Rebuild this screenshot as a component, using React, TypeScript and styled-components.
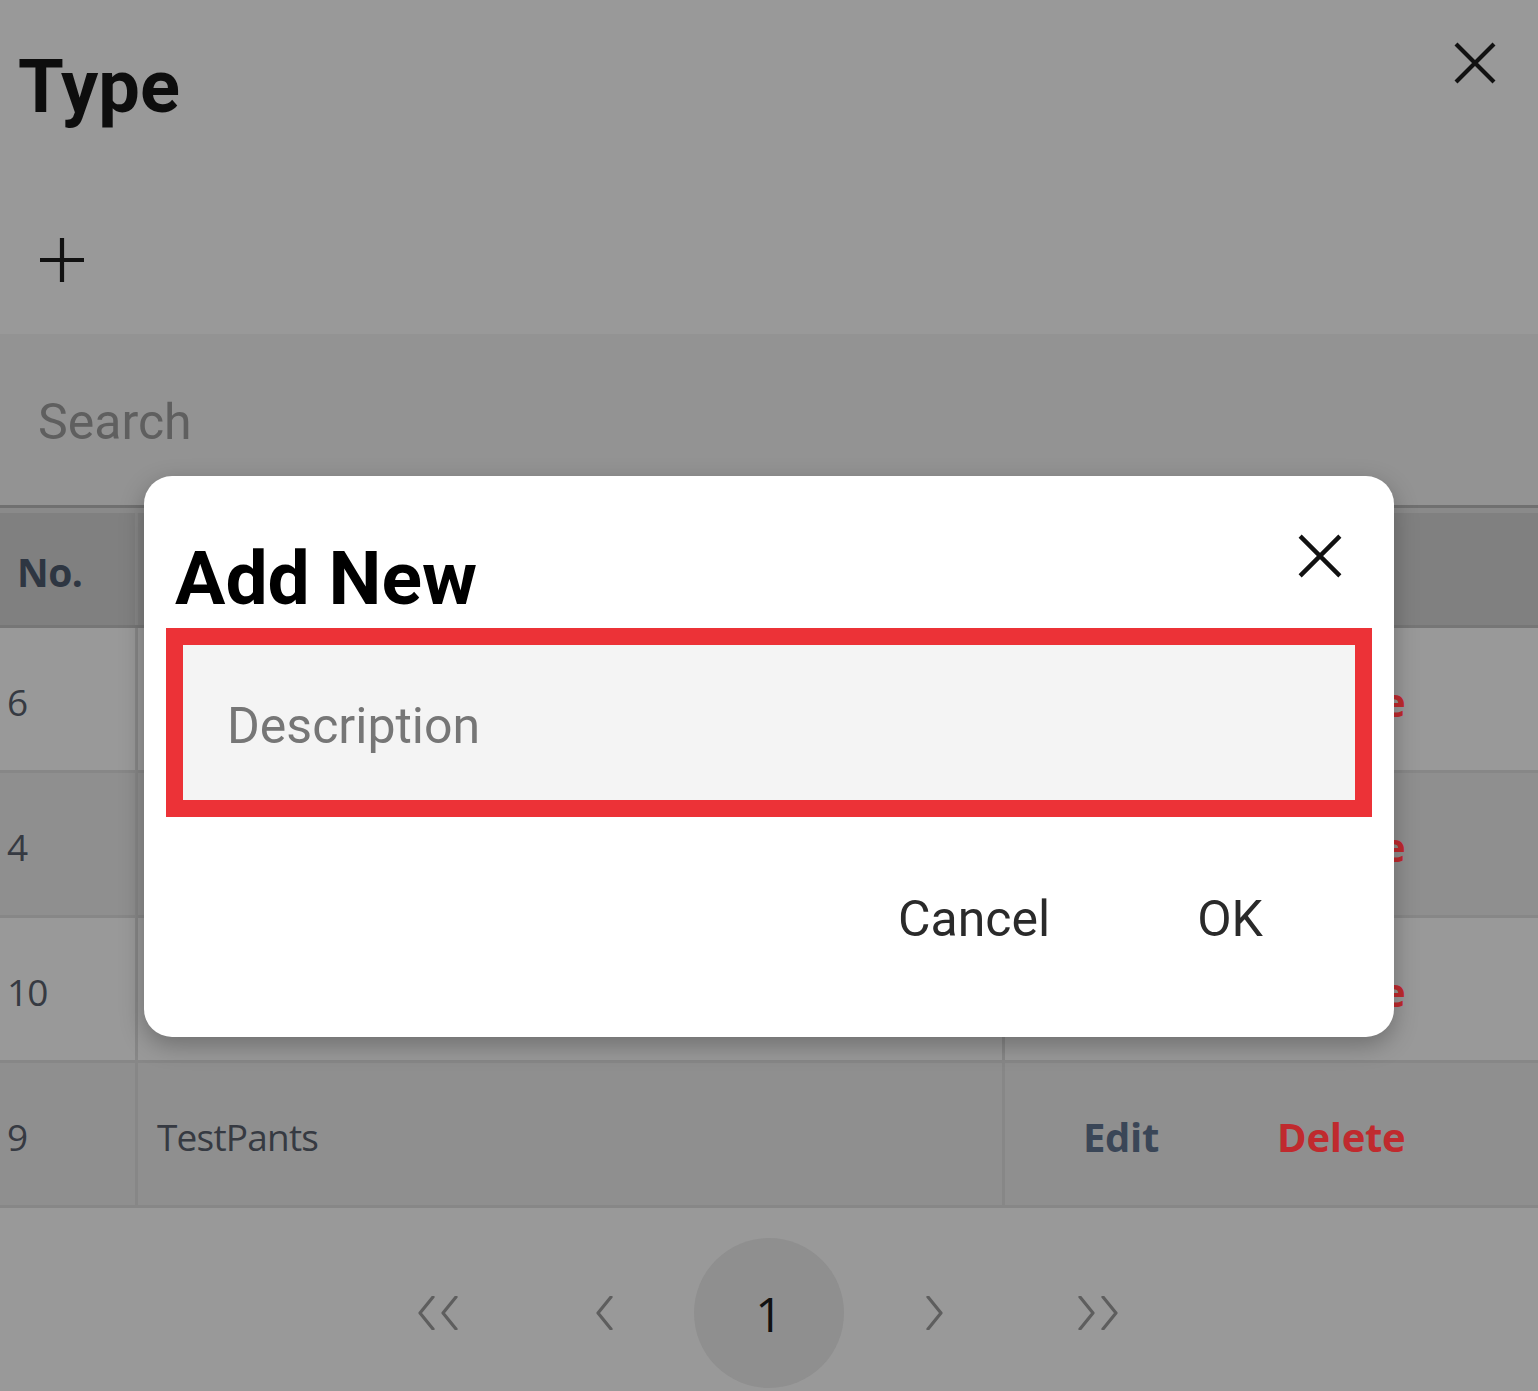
import React from "react";
import styled, { createGlobalStyle } from "styled-components";

const Global = createGlobalStyle`
  html, body { margin: 0; padding: 0; background: #999999; }
  * { box-sizing: border-box; }
`;

const Page = styled.div`
  position: relative;
  width: 1538px;
  height: 1391px;
  overflow: hidden;
  background: #999999;
  font-family: Roboto, "Liberation Sans", sans-serif;
`;

const TopSection = styled.div`
  height: 334px;
  display: flex;
  flex-direction: column;
`;

const TitleBar = styled.div`
  display: flex;
  justify-content: space-between;
  align-items: flex-start;
  padding: 41px 41px 0 18px;
`;

const Title = styled.h1`
  margin: 9px 0 0;
  font-size: 74px;
  line-height: 1;
  font-weight: 700;
  color: #0d0d0d;
`;

const IconButton = styled.button`
  border: 0;
  background: transparent;
  padding: 0;
  display: flex;
  color: #111;
`;

const AddButton = styled(IconButton)`
  margin: 113px 0 0 39px;
  align-self: flex-start;
`;

const SearchBar = styled.div`
  height: 171px;
  background: #939393;
  display: flex;
  align-items: center;
  padding: 5px 0 0 38px;
  font-size: 50px;
  color: #5f5f5f;
`;

const Table = styled.div`
  border-top: 3px solid #707070;
  padding-top: 5px;
  background: #8a8a8a;
  font-family: "Open Sans", "Liberation Sans", sans-serif;
`;

const Row = styled.div<{ $head?: boolean; $alt?: boolean }>`
  display: grid;
  grid-template-columns: 138px 867px 1fr;
  height: ${(p) => (p.$head ? "115px" : "145px")};
  background: ${(p) => (p.$head ? "#808080" : p.$alt ? "#8f8f8f" : "#999999")};
  border-bottom: 3px solid ${(p) => (p.$head ? "#767676" : "#878787")};
`;

const Cell = styled.div<{ $pad?: number; $last?: boolean }>`
  display: flex;
  align-items: center;
  padding-left: ${(p) => p.$pad ?? 18}px;
  padding-top: 4px;
  border-right: ${(p) => (p.$last ? "0" : "3px solid #878787")};
  font-size: 37px;
  color: #363a42;
  letter-spacing: -0.8px;
`;

const HeadLabel = styled.span`
  font-weight: 700;
  font-size: 39px;
  color: #2e3642;
  letter-spacing: -0.5px;
`;

const Actions = styled.div`
  display: flex;
  align-items: center;
  gap: 118px;
  padding-left: 78px;
`;

const ActionLink = styled.span<{ $danger?: boolean }>`
  font-weight: 700;
  font-size: 40px;
  letter-spacing: -0.3px;
  color: ${(p) => (p.$danger ? "#c02a2e" : "#3a4657")};
`;

const Pager = styled.div`
  display: flex;
  justify-content: center;
  align-items: center;
  gap: 15px;
  padding-top: 30px;
`;

const PageItem = styled.div<{ $active?: boolean }>`
  width: 150px;
  height: 150px;
  border-radius: 50%;
  display: flex;
  align-items: center;
  justify-content: center;
  background: ${(p) => (p.$active ? "#8f8f8f" : "transparent")};
  color: #111;
  font-size: 48px;
  font-family: "Open Sans", "Liberation Sans", sans-serif;
`;

const Modal = styled.div`
  position: absolute;
  left: 144px;
  top: 476px;
  width: 1250px;
  height: 561px;
  background: #ffffff;
  border-radius: 28px;
  box-shadow: 0 8px 24px rgba(0, 0, 0, 0.28);
  padding: 65px 22px 0;
  display: flex;
  flex-direction: column;
`;

const ModalTitle = styled.h2`
  margin: 0 0 12px 9px;
  font-size: 75px;
  line-height: 1;
  font-weight: 700;
  color: #000;
`;

const ModalClose = styled(IconButton)`
  position: absolute;
  top: 57px;
  right: 51px;
`;

const InputBox = styled.div`
  height: 189px;
  border: 17px solid #ec3237;
  background: #f4f4f4;
  display: flex;
  align-items: center;
  padding: 6px 0 0 44px;
  font-size: 50px;
  color: #767676;
`;

const ModalActions = styled.div`
  display: flex;
  justify-content: flex-end;
  gap: 147px;
  padding-right: 109px;
  margin-top: 77px;
`;

const TextButton = styled.button`
  border: 0;
  background: transparent;
  padding: 0;
  font-family: Roboto, "Liberation Sans", sans-serif;
  font-size: 50px;
  line-height: 1;
  color: #2a2a2a;
`;

const CloseIcon = ({ size }: { size: number }) => (
  <svg width={size} height={size} viewBox="0 0 44 44">
    <path d="M3 3 L41 41 M41 3 L3 41" stroke="#111" strokeWidth="4.2" fill="none" />
  </svg>
);

const PlusIcon = () => (
  <svg width="46" height="46" viewBox="0 0 46 46">
    <path d="M23 1 V45 M1 23 H45" stroke="#111" strokeWidth="4.2" fill="none" />
  </svg>
);

const Chevron = ({ dir, double }: { dir: "l" | "r"; double?: boolean }) => {
  const one = (x: number) =>
    dir === "l" ? `M${x + 15} 1 L${x + 2} 17 L${x + 15} 33` : `M${x + 2} 1 L${x + 15} 17 L${x + 2} 33`;
  const w = double ? 42 : 19;
  return (
    <svg width={w} height="34" viewBox={`0 0 ${w} 34`}>
      <path
        d={double ? `${one(0)} ${one(23)}` : one(1)}
        stroke="#5e5e5e"
        strokeWidth="3.2"
        fill="none"
        strokeLinecap="round"
        strokeLinejoin="round"
      />
    </svg>
  );
};

const rows = [
  { no: "6", name: "" },
  { no: "4", name: "" },
  { no: "10", name: "" },
  { no: "9", name: "TestPants" },
];

export default function App() {
  return (
    <Page>
      <Global />
      <TopSection>
        <TitleBar>
          <Title>Type</Title>
          <IconButton aria-label="Close">
            <CloseIcon size={44} />
          </IconButton>
        </TitleBar>
        <AddButton aria-label="Add">
          <PlusIcon />
        </AddButton>
      </TopSection>
      <SearchBar>Search</SearchBar>
      <Table>
        <Row $head>
          <Cell $pad={17}>
            <HeadLabel>No.</HeadLabel>
          </Cell>
          <Cell />
          <Cell $last />
        </Row>
        {rows.map((r, i) => (
          <Row key={r.no} $alt={i % 2 === 1}>
            <Cell $pad={7}>{r.no}</Cell>
            <Cell $pad={19}>{r.name}</Cell>
            <Cell $last $pad={0}>
              <Actions>
                <ActionLink>Edit</ActionLink>
                <ActionLink $danger>Delete</ActionLink>
              </Actions>
            </Cell>
          </Row>
        ))}
      </Table>
      <Pager>
        <PageItem>
          <Chevron dir="l" double />
        </PageItem>
        <PageItem>
          <Chevron dir="l" />
        </PageItem>
        <PageItem $active>1</PageItem>
        <PageItem>
          <Chevron dir="r" />
        </PageItem>
        <PageItem>
          <Chevron dir="r" double />
        </PageItem>
      </Pager>
      <Modal>
        <ModalTitle>Add New</ModalTitle>
        <ModalClose aria-label="Close dialog">
          <CloseIcon size={46} />
        </ModalClose>
        <InputBox>Description</InputBox>
        <ModalActions>
          <TextButton>Cancel</TextButton>
          <TextButton>OK</TextButton>
        </ModalActions>
      </Modal>
    </Page>
  );
}
